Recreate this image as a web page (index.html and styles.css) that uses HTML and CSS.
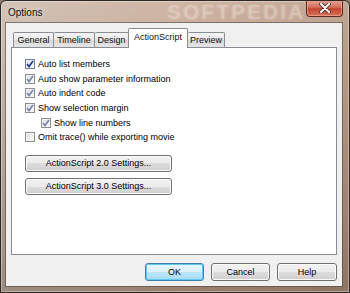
FILE: index.html
```html
<!DOCTYPE html>
<html lang="en">
<head>
  <meta charset="UTF-8" />
  <title>Options</title>
  <link rel="stylesheet" href="styles.css">
</head>
<body>
  <div class="window">
    <div class="titlebar">
      <span class="title">Options</span>
      <span class="watermark">SOFTPEDIA</span>
      <div class="close">
        <svg width="12" height="10" viewBox="0 0 12 10">
          <path d="M2 1 L10 9 M10 1 L2 9" stroke="#3a2a28" stroke-width="3.6" stroke-linecap="round"/>
          <path d="M2 1 L10 9 M10 1 L2 9" stroke="#ffffff" stroke-width="2" stroke-linecap="round"/>
        </svg>
      </div>
    </div>

    <div class="client">
      <div class="tabs">
        <div class="tab w-general">General</div>
        <div class="tab w-timeline">Timeline</div>
        <div class="tab w-design">Design</div>
        <div class="tab w-action selected">ActionScript</div>
        <div class="tab w-preview">Preview</div>
      </div>

      <div class="panel">
        <div class="checks">
          <label class="check"><span class="box focus"><svg width="8" height="8" viewBox="0 0 8 8"><path d="M1 4 L3 6.5 L7 1" fill="none" stroke="#1f3b94" stroke-width="1.7"/></svg></span>Auto list members</label>
          <label class="check"><span class="box"><svg width="8" height="8" viewBox="0 0 8 8"><path d="M1 4 L3 6.5 L7 1" fill="none" stroke="#7487b4" stroke-width="1.7"/></svg></span>Auto show parameter information</label>
          <label class="check"><span class="box"><svg width="8" height="8" viewBox="0 0 8 8"><path d="M1 4 L3 6.5 L7 1" fill="none" stroke="#7487b4" stroke-width="1.7"/></svg></span>Auto indent code</label>
          <label class="check"><span class="box"><svg width="8" height="8" viewBox="0 0 8 8"><path d="M1 4 L3 6.5 L7 1" fill="none" stroke="#7487b4" stroke-width="1.7"/></svg></span>Show selection margin</label>
          <label class="check sub"><span class="box"><svg width="8" height="8" viewBox="0 0 8 8"><path d="M1 4 L3 6.5 L7 1" fill="none" stroke="#7487b4" stroke-width="1.7"/></svg></span>Show line numbers</label>
          <label class="check"><span class="box"></span>Omit trace() while exporting movie</label>
        </div>

        <div class="settings">
          <button class="btn wide">ActionScript 2.0 Settings...</button>
          <button class="btn wide">ActionScript 3.0 Settings...</button>
        </div>
      </div>

      <div class="footer">
        <button class="btn default">OK</button>
        <button class="btn">Cancel</button>
        <button class="btn help">Help</button>
      </div>
    </div>
  </div>
</body>
</html>
```

FILE: styles.css
```css
* {
  margin: 0;
  padding: 0;
  box-sizing: border-box;
}

body {
  font-family: 'Liberation Sans', Arial, sans-serif;
  font-size: 9px;
  color: #000;
  background: #8c7868;
}

.window {
  position: relative;
  width: 350px;
  height: 293px;
  border: 1px solid #2e2824;
  border-radius: 6px 6px 0 0;
  background:
    linear-gradient(to bottom, rgba(255, 255, 255, 0.1), rgba(40, 25, 15, 0.3)),
    linear-gradient(to right, #cdbdb0, #caab98 55%, #bb9c88);
  box-shadow: inset 0 0 0 1px rgba(255, 255, 255, 0.35);
  overflow: hidden;
}

/* title bar */
.titlebar {
  display: flex;
  align-items: flex-start;
  height: 22px;
}

.title {
  font-size: 10px;
  color: #111;
  padding: 6px 0 0 7px;
  text-shadow: 0 0 6px rgba(255, 255, 255, 0.9);
}

.watermark {
  position: absolute;
  left: 166px;
  top: -1px;
  font-size: 21px;
  font-weight: bold;
  letter-spacing: 2px;
  color: rgba(255, 240, 230, 0.2);
  text-shadow: 0 0 3px rgba(255, 255, 255, 0.25);
}

.close {
  margin-left: auto;
  margin-right: 6px;
  margin-top: -1px;
  width: 37px;
  height: 17px;
  display: flex;
  align-items: center;
  justify-content: center;
  border: 1px solid #5e2a20;
  border-top: none;
  border-radius: 0 0 4px 4px;
  background: linear-gradient(to bottom, #e9a796, #d3705c 45%, #c4452f 55%, #d7705a);
  box-shadow: inset 0 0 0 1px rgba(255, 200, 190, 0.45);
}

/* client area */
.client {
  width: 336px;
  height: 263px;
  margin-left: 5px;
  background: #f0f0f0;
  box-shadow: 0 0 0 1px rgba(70, 60, 55, 0.55);
  display: flex;
  flex-direction: column;
}

.tabs {
  display: flex;
  align-items: flex-end;
  height: 24px;
  padding-left: 7px;
  position: relative;
  z-index: 2;
}

.tab {
  height: 15px;
  border: 1px solid #898c95;
  border-bottom: none;
  border-radius: 2px 2px 0 0;
  background: linear-gradient(to bottom, #f6f6f6, #e6e6e6 50%, #dadada 50%, #e4e4e4);
  text-align: center;
  line-height: 14px;
  color: #111;
}

.tab + .tab {
  border-left: none;
}

.tab.selected {
  height: 20px;
  margin-bottom: -1px;
  background: #fff;
  border-left: 1px solid #898c95;
  line-height: 16px;
}

.w-general { width: 41px; }
.w-timeline { width: 41px; }
.w-design { width: 34px; }
.w-action { width: 60px; margin-left: -1px; }
.w-preview { width: 37px; }

.panel {
  height: 208px;
  margin: 0 5px;
  border: 1px solid #898c95;
  background: #fff;
  padding: 9px 0 0 13px;
}

.checks {
  display: flex;
  flex-direction: column;
}

.check {
  display: flex;
  align-items: center;
  gap: 3px;
  height: 14.6px;
  white-space: nowrap;
}

.check.sub {
  padding-left: 16px;
}

.box {
  width: 10px;
  height: 10px;
  border: 1px solid #8e8f8f;
  background: linear-gradient(135deg, #d8d8d8, #f6f6f6 70%, #ffffff);
  box-shadow: inset 0 0 0 1px #f4f4f4;
  display: flex;
  align-items: center;
  justify-content: center;
}

.box.focus {
  border-color: #6a7fa8;
}

.settings {
  display: flex;
  flex-direction: column;
  gap: 6px;
  margin-top: 10px;
}

/* buttons */
.btn {
  font-family: 'Liberation Sans', Arial, sans-serif;
  font-size: 9px;
  color: #000;
  height: 17px;
  border: 1px solid #707070;
  border-radius: 3px;
  background: linear-gradient(to bottom, #f2f2f2, #ebebeb 50%, #dddddd 50%, #cfcfcf);
  box-shadow: inset 0 0 0 1px #fbfbfb;
}

.btn.wide {
  width: 147px;
}

.footer {
  display: flex;
  justify-content: flex-end;
  gap: 7px;
  padding: 8px 5px 0 0;
}

.footer .btn {
  width: 59px;
  height: 18px;
}

.footer .btn.help {
  width: 60px;
}

.btn.default {
  border-color: #3c7fb1;
  background: linear-gradient(to bottom, #eaf6fd, #d9f0fc 50%, #bee6fd 50%, #a7d9f5);
  box-shadow: inset 0 0 0 1px #5fcbf5;
}
```
